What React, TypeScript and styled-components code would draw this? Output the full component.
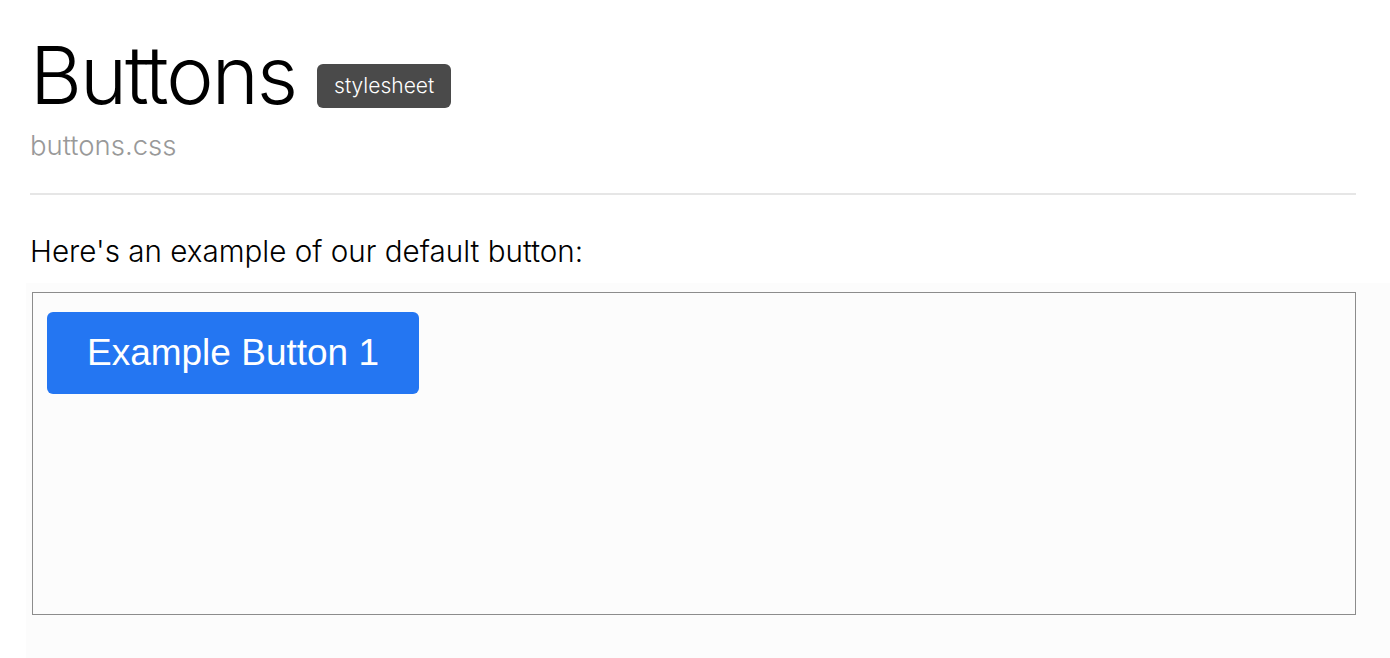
import React from 'react';
import styled, { createGlobalStyle } from 'styled-components';

const GlobalStyle = createGlobalStyle`
    html, body {
        margin: 0;
        padding: 0;
        background: #fff;
    }
    body {
        font-family: 'Liberation Sans', 'Helvetica Neue', Arial, sans-serif;
        color: #000;
    }
`;

const Page = styled.div`
    padding: 27px 34px 0 30px;
`;

const TitleRow = styled.div`
    display: flex;
    align-items: center;
    gap: 21px;
`;

const Title = styled.h1`
    margin: 0;
    font-family: 'Inter', 'Liberation Sans', sans-serif;
    font-weight: 300;
    font-size: 80px;
    line-height: 96px;
    letter-spacing: -2px;
`;

const Badge = styled.span`
    display: inline-block;
    padding: 0 17px;
    height: 44px;
    line-height: 44px;
    background: #4a4a4a;
    color: #fff;
    border-radius: 6px;
    font-family: 'Inter', 'Liberation Sans', sans-serif;
    font-weight: 300;
    font-size: 21px;
    margin-top: 22px;
`;

const Subtitle = styled.div`
    margin-top: 5px;
    font-family: 'Inter', 'Liberation Sans', sans-serif;
    font-weight: 300;
    font-size: 27.5px;
    color: #999;
`;

const Rule = styled.hr`
    margin: 31px 0 0;
    border: 0;
    border-top: 2px solid #e6e6e6;
`;

const Intro = styled.p`
    margin: 36px 0 0;
    font-family: 'Inter', 'Liberation Sans', sans-serif;
    font-weight: 300;
    font-size: 29.6px;
    line-height: 40px;
`;

const Stage = styled.div`
    margin: 12px -34px 0 -4px;
    padding: 9px 34px 60px 6px;
    background: #fcfcfc;
`;

const Frame = styled.div`
    height: 283px;
    border: 1px solid #8c8c8c;
    background: #fcfcfc;
    padding: 19px 14px;
`;

const Button = styled.button<{ $color?: string }>`
    width: 372px;
    height: 82px;
    border: 0;
    border-radius: 6px;
    background: ${({ $color }) => $color || '#2476f2'};
    color: #fff;
    font-family: 'Liberation Sans', Arial, sans-serif;
    font-size: 37px;
    cursor: pointer;
`;

const App = (): JSX.Element => (
    <>
        <GlobalStyle />
        <Page>
            <TitleRow>
                <Title>Buttons</Title>
                <Badge>stylesheet</Badge>
            </TitleRow>
            <Subtitle>buttons.css</Subtitle>
            <Rule />
            <Intro>Here's an example of our default button:</Intro>
            <Stage>
                <Frame>
                    <Button>Example Button 1</Button>
                </Frame>
            </Stage>
        </Page>
    </>
);

export default App;
